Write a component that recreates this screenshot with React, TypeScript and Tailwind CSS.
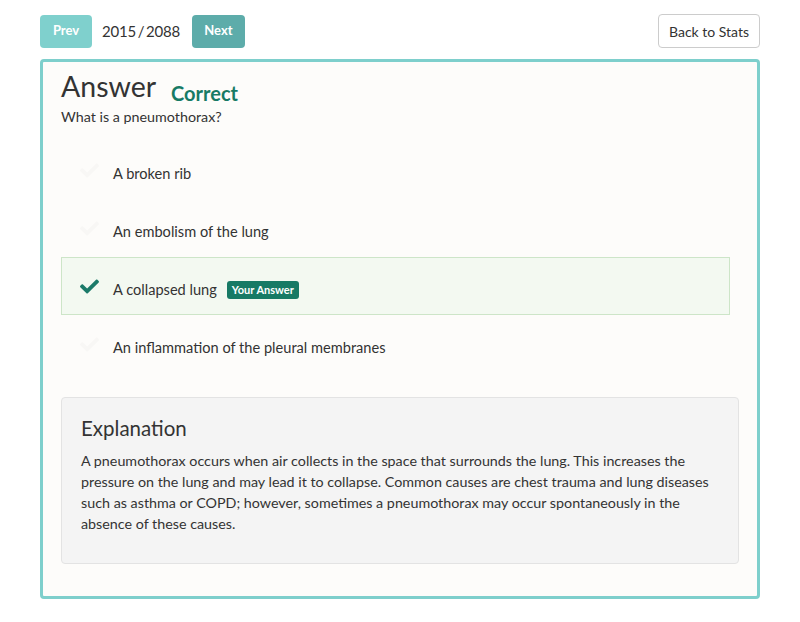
import { FaCheck } from 'react-icons/fa';

type Option = { text: string; selected?: boolean };

const options: Option[] = [
  { text: 'A broken rib' },
  { text: 'An embolism of the lung' },
  { text: 'A collapsed lung', selected: true },
  { text: 'An inflammation of the pleural membranes' },
];

const OptionRow = ({ option }: { option: Option }) => (
  <div
    className={`flex h-[58px] items-center pt-[7px] pl-[16px] mr-[9px] border ${
      option.selected ? 'border-[#cde5c8] bg-[#f3f9f1]' : 'border-transparent'
    }`}
  >
    <FaCheck
      className={`w-[23px] h-[19px] -mt-[7px] ${option.selected ? 'text-[#1b7a69]' : 'text-[#f8f7f5]'}`}
    />
    <span className="ml-[12px] text-[14.6px] leading-[21px]">{option.text}</span>
    {option.selected && (
      <span className="ml-[10px] rounded-[3px] bg-[#177a65] px-[5px] text-[11px] font-bold leading-[18px] text-white">
        Your Answer
      </span>
    )}
  </div>
);

export default function App() {
  return (
    <div className="min-h-[622px] bg-white px-10 pt-[14px] text-[#333] font-['Lato','Liberation_Sans',sans-serif]">
      <div className="flex items-center justify-between">
        <div className="flex items-center">
          <button className="h-[33px] w-[52px] rounded-[4px] bg-[#7fd0cd] text-[13px] font-bold text-white">
            Prev
          </button>
          <span className="ml-[10px] mr-[12px] text-[15px] tracking-[-0.2px]">2015&thinsp;/&thinsp;2088</span>
          <button className="h-[33px] w-[53px] rounded-[4px] bg-[#5dacaa] text-[13px] font-bold text-white">
            Next
          </button>
        </div>
        <button className="h-[34px] w-[102px] rounded-[4px] border border-[#cccccc] bg-white text-[14px]">
          Back to Stats
        </button>
      </div>

      <div className="mt-[11px] h-[540px] rounded-[4px] border-[3px] border-[#7ecfcc] bg-[#fdfcfa] px-[18px] pt-[8px]">
        <div className="flex items-baseline">
          <h1 className="text-[28.5px] leading-[33px]">Answer</h1>
          <span className="relative top-[4px] ml-[15px] text-[20px] font-bold text-[#177a65]">Correct</span>
        </div>
        <p className="mt-[3px] text-[14.3px] leading-[20px]">What is a pneumothorax?</p>

        <div className="mt-[14px]">
          {options.map((o) => (
            <OptionRow key={o.text} option={o} />
          ))}
        </div>

        <div className="mt-[24px] h-[167px] rounded-[4px] border border-[#e3e3e3] bg-[#f4f4f4] px-[19px] pt-[17px]">
          <h2 className="text-[20.5px] leading-[26px]">Explanation</h2>
          <p className="mt-[9px] text-[14.3px] leading-[21px]">
            A pneumothorax occurs when air collects in the space that surrounds the lung. This increases the
            pressure on the lung and may lead it to collapse. Common causes are chest trauma and lung diseases
            such as asthma or COPD; however, sometimes a pneumothorax may occur spontaneously in the absence of
            these causes.
          </p>
        </div>
      </div>
    </div>
  );
}
